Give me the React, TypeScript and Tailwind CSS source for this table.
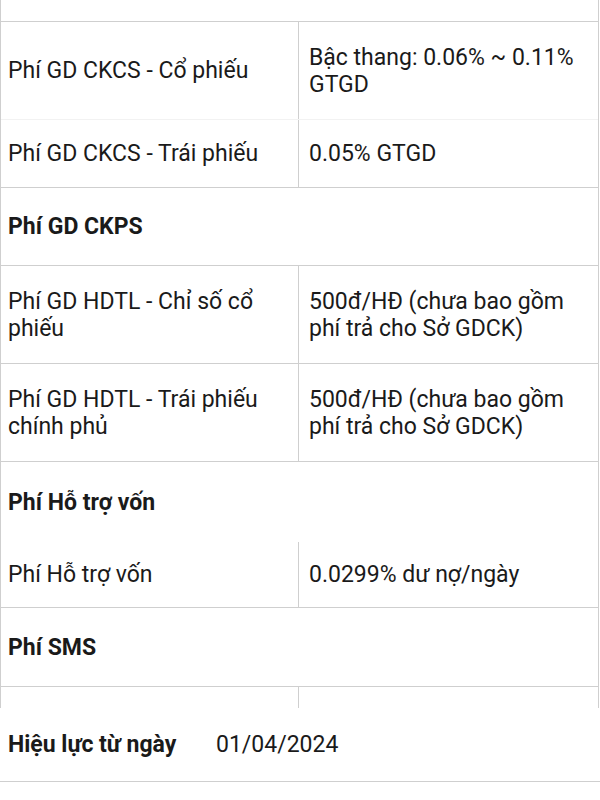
import React from 'react'

type Row =
  | { kind: 'section'; title: string; h: string }
  | { kind: 'item'; label: string; value: string; h: string; line?: string }

const ROWS: Row[] = [
  { kind: 'item', label: 'Phí GD CKCS - Cổ phiếu', value: 'Bậc thang: 0.06% ~ 0.11% GTGD', h: 'h-[98px]', line: 'border-[#f2f2f2]' },
  { kind: 'item', label: 'Phí GD CKCS - Trái phiếu', value: '0.05% GTGD', h: 'h-[68px]' },
  { kind: 'section', title: 'Phí GD CKPS', h: 'h-[78px]' },
  { kind: 'item', label: 'Phí GD HDTL - Chỉ số cổ phiếu', value: '500đ/HĐ (chưa bao gồm phí trả cho Sở GDCK)', h: 'h-[98px]' },
  { kind: 'item', label: 'Phí GD HDTL - Trái phiếu chính phủ', value: '500đ/HĐ (chưa bao gồm phí trả cho Sở GDCK)', h: 'h-[98px]' },
  { kind: 'section', title: 'Phí Hỗ trợ vốn', h: 'h-[80px]', },
  { kind: 'item', label: 'Phí Hỗ trợ vốn', value: '0.0299% dư nợ/ngày', h: 'h-[66px]' },
  { kind: 'section', title: 'Phí SMS', h: 'h-[79px]' },
]

export default function App() {
  return (
    <div className="h-[800px] w-[600px] overflow-hidden bg-white text-[23px] leading-[27px] text-[#1a1a1a]" style={{ fontFamily: 'Roboto, "Noto Sans", sans-serif' }}>
      <div className="w-[599px] border-x border-[#cfcfcf]">
        {/* tail of the previous section row */}
        <div className="h-[22px] border-b border-[#cfcfcf]" />

        {ROWS.map((r, i) => {
          if (r.kind === 'section') {
            const noLine = r.title === 'Phí Hỗ trợ vốn'
            return (
              <div key={i} className={`flex items-center pl-[7px] font-bold ${r.h} ${noLine ? '' : 'border-b border-[#cfcfcf]'}`}>
                {r.title}
              </div>
            )
          }
          return (
            <div key={i} className={`grid grid-cols-[298px_1fr] border-b ${r.line ?? 'border-[#cfcfcf]'} ${r.h}`}>
              <div className="flex items-center border-r border-[#cfcfcf] pr-2 pl-[7px]">{r.label}</div>
              <div className="flex items-center pr-2 pl-[10px]">{r.value}</div>
            </div>
          )
        })}

        {/* clipped SMS row */}
        <div className="grid h-[21px] grid-cols-[298px_1fr]">
          <div className="border-r border-[#cfcfcf]" />
          <div />
        </div>
      </div>

      <div className="flex h-[74px] items-center border-b border-[#cfcfcf] pl-2">
        <span className="w-[208px] font-bold">Hiệu lực từ ngày</span>
        <span>01/04/2024</span>
      </div>
    </div>
  )
}
